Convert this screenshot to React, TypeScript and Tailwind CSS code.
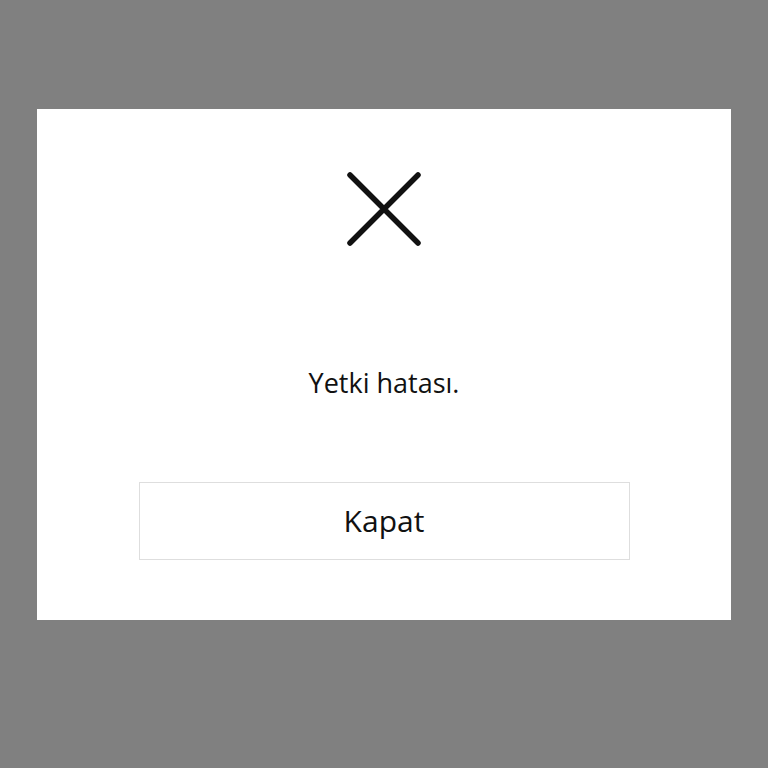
export default function App() {
  return (
    <div className="w-[768px] h-[768px] bg-[#808080] flex justify-center pt-[109px]" style={{ fontFamily: '"Open Sans", sans-serif' }}>
      <div className="w-[694px] h-[511px] bg-white flex flex-col items-center">
        <div className="mt-[62px] w-[76px] h-[76px] flex items-center justify-center">
          <svg width="76" height="76" viewBox="0 0 76 76">
            <path d="M4 4 L72 72 M72 4 L4 72" stroke="#111" strokeWidth="5.5" strokeLinecap="round" fill="none" />
          </svg>
        </div>
        <div className="mt-[117px] text-[27px] leading-[37px] text-[#111]">Yetki hatası.</div>
        <button className="mt-[81px] w-[491px] h-[78px] pb-[2px] border border-[#dedede] bg-white text-[30px] text-[#111] flex items-center justify-center">
          Kapat
        </button>
      </div>
    </div>
  );
}
